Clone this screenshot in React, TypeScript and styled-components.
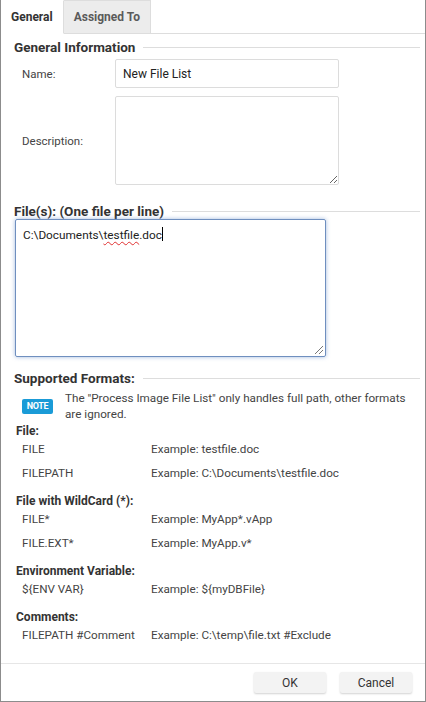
import styled, { createGlobalStyle } from "styled-components";

const GlobalStyle = createGlobalStyle`
  html, body {
    margin: 0;
    padding: 0;
    background: #ffffff;
  }
  body {
    font-family: Roboto, "Liberation Sans", Arial, sans-serif;
    color: #333333;
  }
  * {
    box-sizing: border-box;
  }
`;

interface FormatRow {
  pattern: string;
  example: string;
}

interface FormatGroup {
  title: string;
  rows: FormatRow[];
}

const formatGroups: FormatGroup[] = [
  {
    title: "File:",
    rows: [
      { pattern: "FILE", example: "Example: testfile.doc" },
      { pattern: "FILEPATH", example: "Example: C:\\Documents\\testfile.doc" },
    ],
  },
  {
    title: "File with WildCard (*):",
    rows: [
      { pattern: "FILE*", example: "Example: MyApp*.vApp" },
      { pattern: "FILE.EXT*", example: "Example: MyApp.v*" },
    ],
  },
  {
    title: "Environment Variable:",
    rows: [{ pattern: "${ENV VAR}", example: "Example: ${myDBFile}" }],
  },
  {
    title: "Comments:",
    rows: [{ pattern: "FILEPATH #Comment", example: "Example: C:\\temp\\file.txt #Exclude" }],
  },
];

const App = () => {
  return (
    <>
      <GlobalStyle />
      <Dialog>
        <TabBar>
          <Tab active>General</Tab>
          <Tab>Assigned To</Tab>
          <TabFiller />
        </TabBar>

        <Body>
          <SectionHeader>
            <SectionTitle>General Information</SectionTitle>
            <Rule />
          </SectionHeader>

          <FormRow gap={4}>
            <FieldLabel>Name:</FieldLabel>
            <TextInput defaultValue="New File List" />
          </FormRow>
          <FormRow gap={8}>
            <FieldLabel>Description:</FieldLabel>
            <TextArea height={89} />
          </FormRow>

          <SectionHeader gap={18}>
            <SectionTitle>File(s): (One file per line)</SectionTitle>
            <Rule />
          </SectionHeader>

          <FilesBox>
            <FilesText>
              C:\Documents\<Misspelled>testfile</Misspelled>.doc
              <Caret />
            </FilesText>
            <Grip />
          </FilesBox>

          <SectionHeader gap={13}>
            <SectionTitle>Supported Formats:</SectionTitle>
            <Rule />
          </SectionHeader>

          <NoteRow>
            <NoteBadge>NOTE</NoteBadge>
            <NoteText>
              The "Process Image File List" only handles full path, other formats are ignored.
            </NoteText>
          </NoteRow>

          {formatGroups.map((group, i) => (
            <FormatGroupBlock key={group.title} first={i === 0}>
              <GroupTitle>{group.title}</GroupTitle>
              {group.rows.map((row) => (
                <FormatLine key={row.pattern}>
                  <span>{row.pattern}</span>
                  <span>{row.example}</span>
                </FormatLine>
              ))}
            </FormatGroupBlock>
          ))}
        </Body>

        <Footer>
          <Button>OK</Button>
          <Button>Cancel</Button>
        </Footer>
      </Dialog>
    </>
  );
};

export default App;

const Dialog = styled.div`
  width: 426px;
  height: 702px;
  display: flex;
  flex-direction: column;
  border: 1px solid #8c8c8c;
  border-top: none;
  background: #ffffff;
  overflow: hidden;
`;

const TabBar = styled.div`
  display: flex;
  height: 34px;
  flex-shrink: 0;
`;

const Tab = styled.div<{ active?: boolean }>`
  display: flex;
  align-items: center;
  padding: 0 10px;
  font-size: 12px;
  font-weight: 700;
  color: ${({ active }) => (active ? "#333333" : "#5a5a5a")};
  background: ${({ active }) => (active ? "#ffffff" : "#ececec")};
  border-bottom: 1px solid ${({ active }) => (active ? "transparent" : "#dddddd")};
  border-right: 1px solid #dddddd;
  border-top: 1px solid ${({ active }) => (active ? "transparent" : "#dddddd")};
`;

const TabFiller = styled.div`
  flex: 1;
  border-bottom: 1px solid #dddddd;
`;

const Body = styled.div`
  flex: 1;
  padding: 5px 5px 0 13px;
  overflow: hidden;
`;

const SectionHeader = styled.div<{ gap?: number }>`
  display: flex;
  align-items: center;
  gap: 8px;
  margin-top: ${({ gap }) => gap ?? 0}px;
  height: 16px;
`;

const SectionTitle = styled.h3`
  margin: 0;
  font-size: 13.5px;
  font-weight: 700;
  color: #333333;
  white-space: nowrap;
`;

const Rule = styled.div`
  flex: 1;
  height: 1px;
  background: #dddddd;
`;

const FormRow = styled.div<{ gap: number }>`
  display: grid;
  grid-template-columns: 93px 224px;
  align-items: center;
  margin-top: ${({ gap }) => gap}px;
  padding-left: 8px;
`;

const FieldLabel = styled.label`
  font-size: 11.5px;
  color: #444444;
`;

const TextInput = styled.input`
  height: 29px;
  border: 1px solid #dcdcdc;
  border-radius: 2px;
  padding: 0 7px;
  font-family: inherit;
  font-size: 12px;
  color: #222222;
  outline: none;
`;

const TextArea = styled.textarea<{ height: number }>`
  display: block;
  height: ${({ height }) => height}px;
  border: 1px solid #dcdcdc;
  border-radius: 2px;
  font-family: inherit;
  font-size: 12px;
  resize: both;
  outline: none;
`;

const FilesBox = styled.div`
  position: relative;
  margin-left: 1px;
  width: 311px;
  height: 138px;
  border: 1px solid #6f8fbf;
  border-radius: 2px;
  box-shadow: 0 0 4px rgba(100, 140, 200, 0.6);
  padding: 7px 7px;
`;

const FilesText = styled.div`
  font-size: 11.8px;
  color: #222222;
`;

const Misspelled = styled.span`
  text-decoration: underline wavy #e03030;
  text-decoration-thickness: 1px;
  text-underline-offset: 2px;
`;

const Caret = styled.span`
  display: inline-block;
  width: 1px;
  height: 14px;
  background: #000000;
  vertical-align: -2px;
`;

const Grip = styled.div`
  position: absolute;
  right: 2px;
  bottom: 2px;
  width: 8px;
  height: 8px;
  background: linear-gradient(
    135deg,
    transparent 45%,
    #777777 45%,
    #777777 52%,
    transparent 52%,
    transparent 72%,
    #777777 72%,
    #777777 79%,
    transparent 79%
  );
`;

const NoteRow = styled.div`
  display: flex;
  align-items: center;
  gap: 12px;
  margin-top: 4px;
  padding-left: 8px;
`;

const NoteBadge = styled.span`
  flex-shrink: 0;
  width: 31px;
  height: 15px;
  display: flex;
  align-items: center;
  justify-content: center;
  background: #1a9bd7;
  border-radius: 2px;
  color: #ffffff;
  font-size: 9px;
  font-weight: 700;
  letter-spacing: -0.3px;
`;

const NoteText = styled.div`
  font-size: 11.7px;
  line-height: 16px;
  color: #444444;
`;

const FormatGroupBlock = styled.div<{ first?: boolean }>`
  margin-top: ${({ first }) => (first ? 1 : 12)}px;
  padding-left: 2px;
`;

const GroupTitle = styled.div`
  font-size: 12px;
  font-weight: 700;
  color: #333333;
  line-height: 16px;
`;

const FormatLine = styled.div`
  display: grid;
  grid-template-columns: 129px 1fr;
  padding-left: 6px;
  font-size: 11.7px;
  color: #444444;
  line-height: 16px;
  margin-top: 2px;
  & + & {
    margin-top: 8px;
  }
`;

const Footer = styled.div`
  display: flex;
  justify-content: flex-end;
  gap: 14px;
  height: 38px;
  padding: 8px 13px 0 0;
  border-top: 1px solid #e6e6e6;
  flex-shrink: 0;
`;

const Button = styled.button`
  width: 72px;
  height: 21px;
  border: none;
  border-radius: 2px;
  background: #f3f3f3;
  box-shadow: 0 1px 2px rgba(0, 0, 0, 0.18);
  font-family: inherit;
  font-size: 12px;
  color: #333333;
`;
